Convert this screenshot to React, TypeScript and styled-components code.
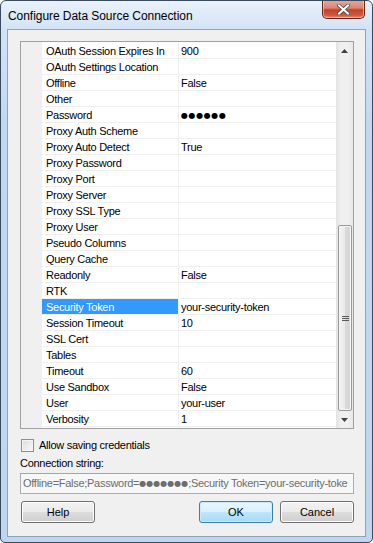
import React from 'react';
import styled, {createGlobalStyle} from 'styled-components';

const Global = createGlobalStyle`
  html, body {
    margin: 0;
    padding: 0;
    background: #ffffff;
  }
  body {
    width: 373px;
    height: 543px;
    overflow: hidden;
  }
`

const Window = styled.div`
  box-sizing: border-box;
  width: 373px;
  height: 543px;
  border: 1px solid #3a4a5e;
  border-radius: 6px 6px 5px 5px;
  background: linear-gradient(to bottom, #eaf2fb 0px, #d3e3f5 28px, #c3d8ef 120px, #c0d6ef 100%);
  display: flex;
  flex-direction: column;
  font-family: "Liberation Sans", Arial, sans-serif;
  font-size: 11px;
  letter-spacing: -0.28px;
  color: #000;
  overflow: hidden;
`
const TitleBar = styled.div`
  height: 28px;
  flex: none;
  display: flex;
  justify-content: space-between;
  align-items: flex-start;
  padding-left: 7px;
  padding-right: 7px;
`
const Title = styled.div`
  font-size: 12px;
  letter-spacing: -0.05px;
  line-height: 14px;
  padding-top: 8px;
  color: #000;
`
const CloseButton = styled.div`
  box-sizing: border-box;
  width: 43px;
  height: 19px;
  margin-top: -1px;
  border: 1px solid #6a2418;
  border-top: none;
  border-radius: 0 0 5px 5px;
  background: linear-gradient(to bottom, #e9a99b 0%, #d98470 45%, #c4402a 55%, #d0583e 85%, #e39a82 100%);
  box-shadow: inset 0 0 0 1px rgba(255, 215, 200, 0.55);
  display: flex;
  align-items: center;
  justify-content: center;
`
const Client = styled.div`
  flex: 1;
  box-sizing: border-box;
  margin: 0 6px 5px 6px;
  border: 1px solid #8ea4bd;
  background: #f0f0f0;
  padding: 11px 11px 0 12px;
  display: flex;
  flex-direction: column;
`
const Grid = styled.div`
  box-sizing: border-box;
  height: 388px;
  border: 1px solid #a0a0a0;
  background: #ffffff;
  display: flex;
`
const Rows = styled.div`
  flex: 1;
  padding-top: 1px;
  display: flex;
  flex-direction: column;
  background: linear-gradient(to right, #f0f0f0 21px, #ffffff 21px);
`
const Row = styled.div`
  height: 16px;
  box-sizing: border-box;
  display: grid;
  grid-template-columns: 21px 136px 1px 1fr;
`
const Margin = styled.div`
  background: #f0f0f0;
`
const Name = styled.div<{$selected?: boolean}>`
  box-sizing: border-box;
  padding: 1px 0 0 4px;
  line-height: 15px;
  white-space: nowrap;
  overflow: hidden;
  background: ${p => (p.$selected ? '#3399ff' : '#ffffff')};
  color: ${p => (p.$selected ? '#ffffff' : '#000000')};
  border-bottom: 1px solid #f0f0f0;
`
const Divider = styled.div`
  background: #f0f0f0;
`
const Value = styled.div`
  box-sizing: border-box;
  padding: 1px 0 0 2px;
  line-height: 15px;
  white-space: nowrap;
  overflow: hidden;
  border-bottom: 1px solid #f0f0f0;
`
const Dots = styled.span`
  font-family: "DejaVu Sans", sans-serif;
  font-size: 8px;
  letter-spacing: 0.6px;
  vertical-align: 1px;
`
const ScrollBar = styled.div`
  width: 17px;
  flex: none;
  display: flex;
  flex-direction: column;
  background: linear-gradient(to right, #e3e3e3, #f0f0f0 30%, #f0f0f0 70%, #e8e8e8);
`
const ArrowButton = styled.div`
  height: 17px;
  flex: none;
  display: flex;
  align-items: center;
  justify-content: center;
`
const Track = styled.div`
  flex: 1;
  display: flex;
  flex-direction: column;
  justify-content: flex-end;
  padding: 0 1px 0 2px;
`
const Thumb = styled.div`
  height: 186px;
  box-sizing: border-box;
  border: 1px solid #979797;
  border-radius: 2px;
  background: linear-gradient(to right, #f3f3f3 0%, #e9e9e9 50%, #d9d9d9 51%, #d4d4d4 100%);
  box-shadow: inset 0 0 0 1px #f8f8f8;
  display: flex;
  align-items: center;
  justify-content: center;
`
const CheckRow = styled.label`
  display: flex;
  align-items: center;
  gap: 5px;
  margin: 10px 0 0 1px;
  height: 13px;
  line-height: 13px;
`
const CheckBox = styled.span`
  box-sizing: border-box;
  width: 13px;
  height: 13px;
  border: 1px solid #8e8f8f;
  background: linear-gradient(135deg, #dcdcdc 0%, #eeeeee 60%, #fafafa 100%);
  box-shadow: inset 0 0 0 1px #f4f4f4;
`
const Caption = styled.div`
  margin-top: 5px;
  line-height: 13px;
`
const ConnBox = styled.div`
  box-sizing: border-box;
  margin-top: 3px;
  height: 21px;
  border: 1px solid #abadb3;
  border-top-color: #a3a5aa;
  background: #f7f7f7;
  color: #6d6d6d;
  padding-left: 2px;
  line-height: 19px;
  white-space: nowrap;
  overflow: hidden;
`
const ConnDots = styled.span`
  font-family: "DejaVu Sans", sans-serif;
  font-size: 8px;
  vertical-align: 1px;
  letter-spacing: 0px;
`
const ButtonRow = styled.div`
  display: flex;
  gap: 7px;
  margin-top: 7px;
  padding-left: 1px;
`
const Button = styled.button<{$default?: boolean}>`
  box-sizing: border-box;
  width: 74px;
  height: 22px;
  padding: 0;
  font-family: "Liberation Sans", Arial, sans-serif;
  font-size: 11px;
  color: #000;
  border-radius: 3px;
  border: 1px solid ${p => (p.$default ? '#3c7fb1' : '#707070')};
  background: ${p =>
    p.$default
      ? 'linear-gradient(to bottom, #eaf6fd 0%, #d9f0fc 50%, #bee6fd 51%, #a7d9f5 100%)'
      : 'linear-gradient(to bottom, #f2f2f2 0%, #ebebeb 50%, #dddddd 51%, #cfcfcf 100%)'};
  box-shadow: inset 0 0 0 1px ${p => (p.$default ? '#cbe9fa' : '#fcfcfc')};
`
const Spacer = styled.div`
  flex: 1;
`

type Prop = {name: string; value?: string; secret?: boolean; selected?: boolean};

const props: Prop[] = [
  {name: 'OAuth Session Expires In', value: '900'},
  {name: 'OAuth Settings Location'},
  {name: 'Offline', value: 'False'},
  {name: 'Other'},
  {name: 'Password', value: '●●●●●●', secret: true},
  {name: 'Proxy Auth Scheme'},
  {name: 'Proxy Auto Detect', value: 'True'},
  {name: 'Proxy Password'},
  {name: 'Proxy Port'},
  {name: 'Proxy Server'},
  {name: 'Proxy SSL Type'},
  {name: 'Proxy User'},
  {name: 'Pseudo Columns'},
  {name: 'Query Cache'},
  {name: 'Readonly', value: 'False'},
  {name: 'RTK'},
  {name: 'Security Token', value: 'your-security-token', selected: true},
  {name: 'Session Timeout', value: '10'},
  {name: 'SSL Cert'},
  {name: 'Tables'},
  {name: 'Timeout', value: '60'},
  {name: 'Use Sandbox', value: 'False'},
  {name: 'User', value: 'your-user'},
  {name: 'Verbosity', value: '1'},
];

function App() {
  return (
    <>
      <Global/>
      <Window>
        <TitleBar>
          <Title>Configure Data Source Connection</Title>
          <CloseButton>
            <svg width="13" height="11" viewBox="0 0 13 11">
              <path d="M2 1.5 L11 9.5 M11 1.5 L2 9.5" stroke="#4a4a4a" strokeWidth="3.6" strokeLinecap="square"/>
              <path d="M2 1.5 L11 9.5 M11 1.5 L2 9.5" stroke="#ffffff" strokeWidth="2" strokeLinecap="square"/>
            </svg>
          </CloseButton>
        </TitleBar>
        <Client>
          <Grid>
            <Rows>
              {props.map(p =>
                <Row key={p.name}>
                  <Margin/>
                  <Name $selected={p.selected}>{p.name}</Name>
                  <Divider/>
                  <Value>{p.secret ? <Dots>{p.value}</Dots> : p.value}</Value>
                </Row>)}
            </Rows>
            <ScrollBar>
              <ArrowButton>
                <svg width="7" height="4" viewBox="0 0 7 4"><path d="M0 4 L3.5 0 L7 4 Z" fill="#404040"/></svg>
              </ArrowButton>
              <Track>
                <Thumb>
                  <svg width="7" height="7" viewBox="0 0 7 7">
                    <path d="M0 1.5 H7 M0 3.5 H7 M0 5.5 H7" stroke="#5a5a5a" strokeWidth="1"/>
                  </svg>
                </Thumb>
              </Track>
              <ArrowButton>
                <svg width="7" height="4" viewBox="0 0 7 4"><path d="M0 0 L3.5 4 L7 0 Z" fill="#404040"/></svg>
              </ArrowButton>
            </ScrollBar>
          </Grid>
          <CheckRow>
            <CheckBox/>
            <span>Allow saving credentials</span>
          </CheckRow>
          <Caption>Connection string:</Caption>
          <ConnBox>
            Offline=False;Password=<ConnDots>●●●●●●●</ConnDots>;Security Token=your-security-toke
          </ConnBox>
          <ButtonRow>
            <Button>Help</Button>
            <Spacer/>
            <Button $default>OK</Button>
            <Button>Cancel</Button>
          </ButtonRow>
        </Client>
      </Window>
    </>
  );
}

export default App
